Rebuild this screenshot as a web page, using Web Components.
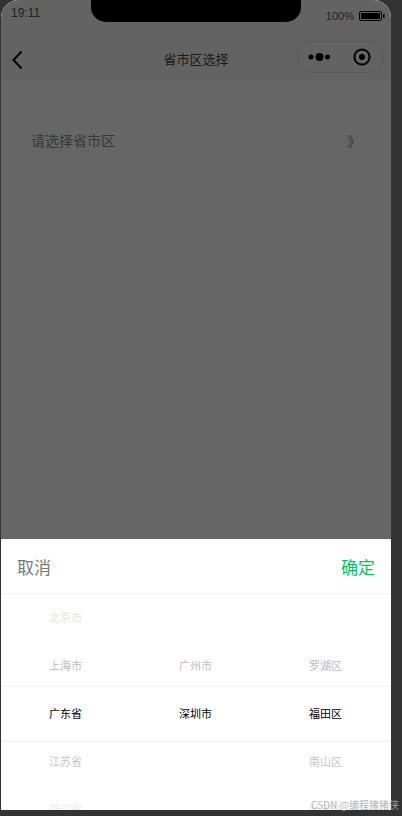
<!DOCTYPE html>
<html lang="zh-CN">
<head>
<meta charset="utf-8">
<title>省市区选择</title>
<style>
  html, body { margin: 0; height: 100%; background: #333; overflow: hidden; }
  body { font-family: "Noto Sans CJK SC", "Liberation Sans", sans-serif; }
</style>
</head>
<body>
<phone-frame>
  <status-bar time="19:11" battery="100%"></status-bar>
  <nav-bar title="省市区选择"></nav-bar>
  <region-row placeholder="请选择省市区"></region-row>
  <picker-sheet slot="sheet">
    <picker-column items="北京市,上海市,广东省,江苏省,浙江省" selected="2"></picker-column>
    <picker-column items=",广州市,深圳市,," selected="2"></picker-column>
    <picker-column items=",罗湖区,福田区,南山区,盐田区" selected="2"></picker-column>
  </picker-sheet>
</phone-frame>
<csdn-mark>CSDN @编程猪猪侠</csdn-mark>

<script>
class PhoneFrame extends HTMLElement {
  constructor () {
    super();
    this.root = this.attachShadow({mode: 'open'});
    this.root.innerHTML = `
    <style>
      :host {
        display: block;
        position: relative;
        width: 390px;
        height: 810px;
        margin-left: 1px;
        border-radius: 18px 18px 0 0;
        overflow: hidden;
        background: #fff;
      }
      .page { display: flex; flex-direction: column; height: 100%; }
      .mask { position: absolute; inset: 0; background: rgba(0, 0, 0, .6); }
      .notch {
        position: absolute;
        left: 90px;
        top: 0;
        width: 210px;
        height: 22px;
        background: #000;
        border-radius: 0 0 15px 15px;
      }
    </style>
    <div class="page"><slot></slot></div>
    <div class="mask"></div>
    <div class="notch"></div>
    <slot name="sheet"></slot>`;
  }
}

class StatusBar extends HTMLElement {
  constructor () {
    super();
    this.root = this.attachShadow({mode: 'open'});
  }
  connectedCallback() {
    this.root.innerHTML = `
    <style>
      :host {
        display: flex;
        justify-content: space-between;
        align-items: center;
        height: 30px;
        padding: 0 6px 2px 10px;
        box-sizing: border-box;
        background: #f7f7f7;
        color: #555;
      }
      .right { display: flex; align-items: center; gap: 5px; padding-top: 3px; }
      .time { font-family: "Liberation Sans", sans-serif; font-size: 12px; position: relative; top: -1px; }
      .pct { font-family: "Liberation Sans", sans-serif; font-size: 11px; }
      svg { display: block; }
    </style>
    <span class="time">${this.getAttribute('time')}</span>
    <span class="right">
      <span class="pct">${this.getAttribute('battery')}</span>
      <svg width="26" height="10" viewBox="0 0 26 10">
        <rect x=".5" y=".5" width="22" height="9" rx="1.5" fill="none" stroke="#000"/>
        <rect x="2" y="2" width="19" height="6" fill="#000"/>
        <rect x="24" y="3" width="1.5" height="4" fill="#000"/>
      </svg>
    </span>`;
  }
}

class NavBar extends HTMLElement {
  constructor () {
    super();
    this.root = this.attachShadow({mode: 'open'});
  }
  connectedCallback() {
    this.root.innerHTML = `
    <style>
      :host {
        display: grid;
        grid-template-columns: 1fr auto 1fr;
        align-items: center;
        height: 50px;
        box-sizing: border-box;
        padding: 4px 7px 0;
        background: #f7f7f7;
      }
      .title { font-size: 13px; color: #444; padding-top: 3px; }
      .back { display: block; margin: 5px 0 0 2px; }
      .cap-wrap { justify-self: end; }
    </style>
    <svg class="back" width="14" height="20" viewBox="0 0 14 20">
      <path d="M11.5 1.5 L3.5 10 L11.5 18.5" fill="none" stroke="#000" stroke-width="2"/>
    </svg>
    <span class="title">${this.getAttribute('title')}</span>
    <span class="cap-wrap"><nav-capsule></nav-capsule></span>`;
  }
}

class NavCapsule extends HTMLElement {
  constructor () {
    super();
    this.root = this.attachShadow({mode: 'open'});
    this.root.innerHTML = `
    <style>
      :host {
        display: flex;
        align-items: center;
        justify-content: space-between;
        width: 87px;
        height: 32px;
        padding: 0 11px 0 10px;
        box-sizing: border-box;
        border: 1px solid #dedede;
        border-radius: 16px;
        background: #f7f7f7;
      }
      svg { display: block; }
    </style>
    <svg width="24" height="10" viewBox="0 0 24 10">
      <circle cx="3" cy="5" r="2.5" fill="#000"/>
      <circle cx="11.5" cy="5" r="4" fill="#000"/>
      <circle cx="19.5" cy="5" r="2.5" fill="#000"/>
    </svg>
    <svg width="20" height="20" viewBox="0 0 20 20">
      <circle cx="10" cy="10" r="7.6" fill="none" stroke="#000" stroke-width="2"/>
      <circle cx="10" cy="10" r="3" fill="#000"/>
    </svg>`;
  }
}

class RegionRow extends HTMLElement {
  constructor () {
    super();
    this.root = this.attachShadow({mode: 'open'});
  }
  connectedCallback() {
    this.root.innerHTML = `
    <style>
      :host {
        display: flex;
        justify-content: space-between;
        align-items: center;
        margin-top: 46px;
        padding: 0 30px;
        font-size: 14px;
        line-height: 28px;
        color: #8c8c8c;
      }
    </style>
    <span>${this.getAttribute('placeholder')}</span>
    <span>》</span>`;
  }
}

class PickerSheet extends HTMLElement {
  constructor () {
    super();
    this.root = this.attachShadow({mode: 'open'});
    this.root.innerHTML = `
    <style>
      :host {
        display: block;
        position: absolute;
        left: 0;
        right: 0;
        bottom: 0;
        height: 271px;
        background: #fff;
        overflow: hidden;
      }
      .bar {
        display: flex;
        justify-content: space-between;
        align-items: center;
        height: 55px;
        padding: 0 16px;
        border-bottom: 1px solid #f1f1f1;
        box-sizing: border-box;
        font-size: 17px;
      }
      .cancel { color: #777; }
      .ok { color: #07c160; }
      .wheel { position: relative; display: grid; grid-template-columns: repeat(3, 1fr); margin: -1px 0 0 -.5px; width: 390px; }
      .line {
        position: absolute;
        left: .5px;
        right: -.5px;
        top: 93px;
        height: 56px;
        border-top: 1px solid #f1f1f1;
        border-bottom: 1px solid #f1f1f1;
        box-sizing: border-box;
      }
    </style>
    <div class="bar"><span class="cancel">取消</span><span class="ok">确定</span></div>
    <div class="wheel">
      <slot></slot>
      <div class="line"></div>
    </div>`;
  }
}

class PickerColumn extends HTMLElement {
  constructor () {
    super();
    this.root = this.attachShadow({mode: 'open'});
  }
  connectedCallback() {
    const items = this.getAttribute('items').split(',');
    const selected = Number(this.getAttribute('selected'));
    // the wheel fades away from the selected row, a bit faster below it
    const colours = {'-2': '#e4e4e4', '-1': '#bbb', '0': '#000', '1': '#c6c6c6', '2': '#e8e8e8'};
    const rows = items.map((text, i) => {
      return `<div class="item" style="color:${colours[i - selected]}">${text}</div>`;
    }).join('');
    this.root.innerHTML = `
    <style>
      :host { display: block; font-size: 11px; text-align: center; }
      .item { height: 48px; line-height: 48px; }
    </style>
    ${rows}`;
  }
}

class CsdnMark extends HTMLElement {
  constructor () {
    super();
    this.root = this.attachShadow({mode: 'open'});
    this.root.innerHTML = `
    <style>
      :host {
        display: block;
        position: absolute;
        left: 311px;
        top: 798px;
        font-size: 10px;
        line-height: 14px;
        white-space: nowrap;
        color: rgba(170, 170, 170, .9);
      }
    </style>
    <slot></slot>`;
  }
}

customElements.define('phone-frame', PhoneFrame);
customElements.define('status-bar', StatusBar);
customElements.define('nav-bar', NavBar);
customElements.define('nav-capsule', NavCapsule);
customElements.define('region-row', RegionRow);
customElements.define('picker-sheet', PickerSheet);
customElements.define('picker-column', PickerColumn);
customElements.define('csdn-mark', CsdnMark);
</script>
</body>
</html>
